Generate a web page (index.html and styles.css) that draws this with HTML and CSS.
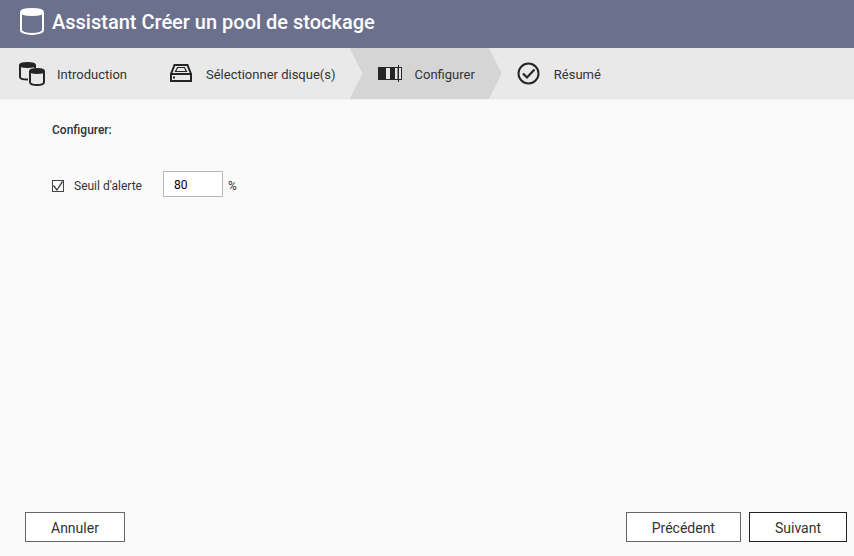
FILE: index.html
```html
<!DOCTYPE html>
<html lang="fr">
<head>
<meta charset="utf-8">
<title>Assistant Créer un pool de stockage</title>
<meta name="viewport" content="width=device-width, initial-scale=1">
<link rel="stylesheet" href="styles.css">
</head>
<body>

<header class="titlebar">
  <svg width="26" height="28" viewBox="0 0 26 28" fill="none" stroke="#fff" stroke-width="2">
    <path d="M2 4v18c0 2.400 5 4 11 4s11-1.600 11-4V4"/>
    <ellipse cx="13" cy="4" rx="11" ry="3" fill="#fff"/>
  </svg>
  <h1>Assistant Créer un pool de stockage</h1>
</header>

<ol class="steps">
  <li class="step">
    <svg width="26" height="24" viewBox="0 0 26 24" fill="none" stroke="#262626" stroke-width="2">
      <path d="M1 3v12c0 1.500 3 2.500 8 2.500M16 3v3"/>
      <ellipse cx="8.500" cy="3" rx="7.500" ry="2" fill="#262626"/>
      <path d="M11 9v11c0 2 3 3 7 3s7-1 7-3V9"/>
      <ellipse cx="18" cy="9" rx="7" ry="2" fill="#262626"/>
    </svg>
    <span>Introduction</span>
  </li>
  <li class="step">
    <svg width="26" height="24" viewBox="0 0 26 24" fill="none" stroke="#262626" stroke-width="2">
      <path d="M3 12h20v7H3zM3 12L6.500 3h13L23 12"/>
      <path d="M7.500 9.500l2-4h7l2 4z" stroke-width="1.200"/>
      <path d="M5 14.500h2v2H5z" fill="#262626" stroke="none"/>
    </svg>
    <span>Sélectionner disque(s)</span>
  </li>
  <li class="step active">
    <svg width="26" height="24" viewBox="0 0 26 24">
      <path d="M1 5h24v13H1z" fill="#262626"/>
      <path d="M9 6h4v11H9zM18 6h2.500v11H18zM22 6h2v11h-2z" fill="#e6e6e6"/>
      <path d="M21 3h1v17h-1z" fill="#262626"/>
    </svg>
    <span>Configurer</span>
  </li>
  <li class="step">
    <svg width="26" height="24" viewBox="0 0 26 24" fill="none" stroke="#262626" stroke-width="2">
      <circle cx="12.500" cy="11.500" r="10"/>
      <path d="M7 11.500l4 4 7.500-8" stroke-width="2.200"/>
    </svg>
    <span>Résumé</span>
  </li>
</ol>

<form class="wizard">
  <div class="content">
    <h2>Configurer:</h2>
    <div class="threshold">
      <input type="checkbox" id="alert" checked>
      <label for="alert">Seuil d'alerte</label>
      <input type="text" id="percent" value="80" aria-label="Seuil d'alerte en pourcentage">
      <label for="percent">%</label>
    </div>
  </div>

  <div class="buttons">
    <button type="button" class="cancelbtn">Annuler</button>
    <button type="button">Précédent</button>
    <button type="submit" class="nextbtn">Suivant</button>
  </div>
</form>

</body>
</html>
```

FILE: styles.css
```css
* {
  box-sizing: border-box;
}

body {
  margin: 0;
  min-height: 100vh;
  display: flex;
  flex-direction: column;
  background-color: #fafafa;
  color: #333;
  font-family: Roboto, "Liberation Sans", sans-serif;
  font-size: 12px;
}

.titlebar {
  display: flex;
  align-items: center;
  gap: 7px;
  height: 48px;
  padding: 0 19px 4px;
  background-color: #6b718d;
  color: #fff;
}

.titlebar h1 {
  margin: 0;
  font-size: 20px;
  font-weight: 500;
}

/* wizard steps */
.steps {
  display: flex;
  margin: 0;
  padding: 0;
  list-style: none;
  background-color: #e9e9e9;
  border-bottom: 1px solid #f0f0f0;
}

.step {
  display: flex;
  align-items: center;
  gap: 12px;
  height: 51px;
  margin-right: -13px;
  padding: 0 27px;
  font-size: 13px;
}

.step:first-child {
  padding-left: 19px;
}

.step span {
  padding-top: 2px;
}

.step.active {
  background-color: #d5d5d5;
  clip-path: polygon(0 0, calc(100% - 13px) 0, 100% 50%, calc(100% - 13px) 100%, 0 100%, 13px 50%);
}

.wizard {
  flex: 1;
  display: flex;
  flex-direction: column;
}

.content {
  flex: 1;
  padding: 22px 52px;
}

.content h2 {
  margin: 0 0 33px;
  font-size: 12px;
  font-weight: 500;
  line-height: 16px;
}

.threshold {
  display: flex;
  align-items: center;
}

input[type=checkbox] {
  appearance: none;
  width: 12px;
  height: 12px;
  margin: 4px 10px 0 0;
  border: 1px solid #444;
  background-color: #fff;
}

/* tick mark */
input[type=checkbox]:checked::before {
  content: "";
  display: block;
  width: 10px;
  height: 10px;
  background-color: #333;
  clip-path: polygon(0 5px, 1px 4px, 4px 8px, 9px 0, 10px 1px, 4px 10px);
}

.threshold label {
  padding-top: 3px;
}

input[type=text] {
  width: 60px;
  height: 26px;
  margin: 0 5px 0 21px;
  padding: 2px 10px 0;
  border: 1px solid #b8b8b8;
  background-color: #fff;
  color: #000;
  font-family: inherit;
  font-size: 12px;
}

.buttons {
  display: flex;
  gap: 8px;
  padding: 0 7px 14px 25px;
}

button {
  height: 30px;
  padding: 2px 25px 0;
  border: 1px solid #666;
  background-color: #fff;
  color: #333;
  font-family: inherit;
  font-size: 14px;
  cursor: pointer;
}

.cancelbtn {
  margin-right: auto;
}

.nextbtn {
  border-color: #222;
}
```
